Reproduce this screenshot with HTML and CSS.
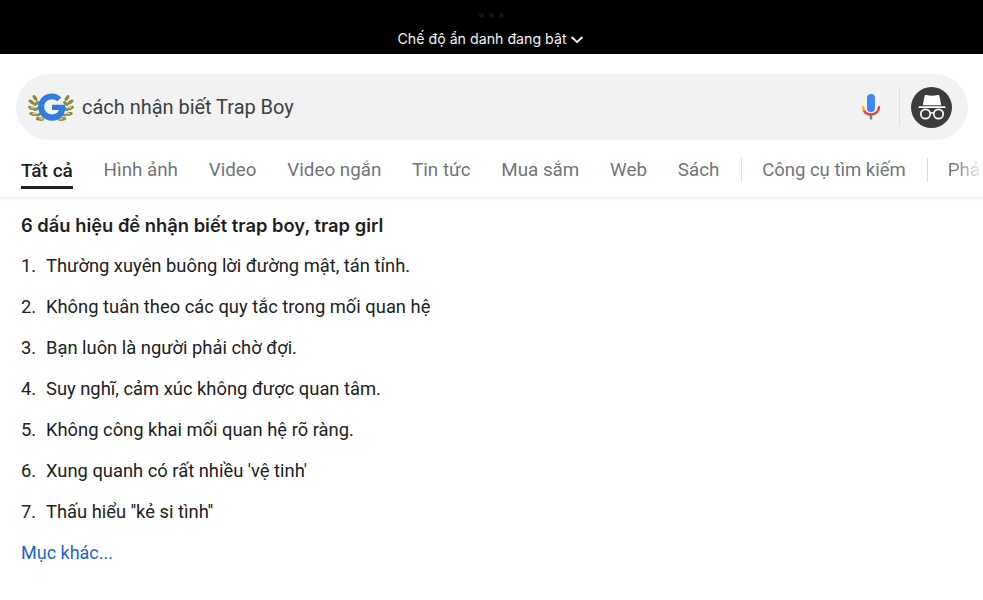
FILE: index.html
```html
<!DOCTYPE html>
<html lang="vi">
<head>
<meta charset="utf-8">
<title>cách nhận biết Trap Boy</title>
<link rel="stylesheet" href="styles.css">
</head>
<body>
<header class="statusbar">
  <div class="dots"><i></i><i></i><i></i></div>
  <div class="incognito-note">Chế độ ẩn danh đang bật
    <svg class="chev" width="12" height="8" viewBox="0 0 12 8"><path d="M1.2 1.5 6 6.2l4.8-4.700" fill="none" stroke="#fff" stroke-width="1.8" stroke-linecap="round" stroke-linejoin="round"/></svg>
  </div>
</header>
<section class="top">
  <div class="search">
    <svg class="logo" width="46" height="30" viewBox="0 0 46 30">
      <g fill="#8f8a3c">
        <ellipse cx="7" cy="6" rx="3.4" ry="1.700" transform="rotate(55 7 6)"/>
        <ellipse cx="3.500" cy="10" rx="3.400" ry="1.700" transform="rotate(35 3.500 10)"/>
        <ellipse cx="8.300" cy="11.500" rx="3.200" ry="1.500" transform="rotate(-40 8.300 11.500)"/>
        <ellipse cx="3.500" cy="16" rx="3.600" ry="1.800" transform="rotate(20 3.500 16)"/>
        <ellipse cx="8.500" cy="17" rx="3.200" ry="1.500" transform="rotate(-35 8.500 17)"/>
        <ellipse cx="5" cy="22" rx="3.800" ry="1.800" transform="rotate(10 5 22)"/>
        <ellipse cx="11" cy="22.500" rx="3.200" ry="1.500" transform="rotate(-25 11 22.500)"/>
        <ellipse cx="12" cy="27" rx="4.200" ry="1.800" transform="rotate(8 12 27)"/>
        <ellipse cx="39" cy="6" rx="3.400" ry="1.700" transform="rotate(-55 39 6)"/>
        <ellipse cx="42.500" cy="10" rx="3.400" ry="1.700" transform="rotate(-35 42.500 10)"/>
        <ellipse cx="37.700" cy="11.500" rx="3.200" ry="1.500" transform="rotate(40 37.700 11.500)"/>
        <ellipse cx="42.500" cy="16" rx="3.600" ry="1.800" transform="rotate(-20 42.500 16)"/>
        <ellipse cx="37.500" cy="17" rx="3.200" ry="1.500" transform="rotate(35 37.500 17)"/>
        <ellipse cx="41" cy="22" rx="3.800" ry="1.800" transform="rotate(-10 41 22)"/>
        <ellipse cx="35" cy="22.500" rx="3.200" ry="1.500" transform="rotate(25 35 22.500)"/>
        <ellipse cx="34" cy="27" rx="4.200" ry="1.800" transform="rotate(-8 34 27)"/>
      </g>
      <g fill="#d9d3a0">
        <ellipse cx="4" cy="15.500" rx="1.800" ry=".7" transform="rotate(20 4 15.500)"/>
        <ellipse cx="6" cy="21.700" rx="2" ry=".7" transform="rotate(10 6 21.700)"/>
        <ellipse cx="13" cy="26.800" rx="2.200" ry=".7" transform="rotate(8 13 26.800)"/>
        <ellipse cx="42" cy="15.500" rx="1.800" ry=".7" transform="rotate(-20 42 15.500)"/>
        <ellipse cx="40" cy="21.700" rx="2" ry=".7" transform="rotate(-10 40 21.700)"/>
        <ellipse cx="33" cy="26.800" rx="2.200" ry=".7" transform="rotate(-8 33 26.800)"/>
      </g>
      <path d="M37 12.800H24v5.200h7c-1 2.700-3.500 4.400-7 4.400-4.500 0-7.800-3.300-7.800-7.600s3.300-7.600 7.800-7.600c2.200 0 4 .8 5.400 2.100l3.900-3.900C30.600 2.900 27.600 1.500 24 1.500 15.800 1.500 10 7.500 10 14.800s5.800 14 14 14c7.900 0 13.300-5.500 13.300-13.200 0-1-.1-1.900-.3-2.800z" fill="#2f7de1"/>
    </svg>
    <span class="query">cách nhận biết Trap Boy</span>
    <svg class="mic" width="20" height="28" viewBox="0 0 20 28">
      <rect x="6" y="1" width="8" height="18" rx="4" fill="#4285f4"/>
      <path d="M10 21.500c-3.400 0-6.300-1.800-7.400-4.700" fill="none" stroke="#ea4335" stroke-width="2.400"/>
      <path d="M2.600 16.800c-.3-.8-.6-1.700-.6-2.700" fill="none" stroke="#fbbc05" stroke-width="2.400" stroke-linecap="round"/>
      <path d="M18 14.100c0 4.300-3.500 7.400-8 7.400" fill="none" stroke="#ea4335" stroke-width="2.400" stroke-linecap="round"/>
      <rect x="8.800" y="22" width="2.400" height="4.500" fill="#34a853"/>
    </svg>
    <span class="vline"></span>
    <span class="avatar">
      <svg width="30" height="26" viewBox="0 0 30 26">
        <path d="M7.500 2.200c.2-1 .8-1.300 1.800-1.100 1.900.4 3.800.6 5.700.6s3.800-.2 5.700-.6c1-.2 1.600.1 1.800 1.100L24.200 11.300H5.800z" fill="#fff"/>
        <rect x="1.500" y="12.300" width="27" height="1.700" rx=".85" fill="#fff"/>
        <circle cx="8.500" cy="20" r="4.700" fill="none" stroke="#fff" stroke-width="1.700"/>
        <circle cx="21.500" cy="20" r="4.700" fill="none" stroke="#fff" stroke-width="1.700"/>
        <path d="M13 19.300c1.300-.7 2.700-.7 4 0" fill="none" stroke="#fff" stroke-width="1.500"/>
      </svg>
    </span>
  </div>
  <nav class="tabs">
    <a class="tab active">Tất cả</a>
    <a class="tab">Hình ảnh</a>
    <a class="tab">Video</a>
    <a class="tab">Video ngắn</a>
    <a class="tab">Tin tức</a>
    <a class="tab">Mua sắm</a>
    <a class="tab">Web</a>
    <a class="tab">Sách</a>
    <span class="tab-sep"></span>
    <a class="tab tools">Công cụ tìm kiếm</a>
    <span class="tab-sep"></span>
    <a class="tab fade">Phả</a>
  </nav>
</section>
<main class="snippet">
  <h2 class="heading">6 dấu hiệu để nhận biết trap boy, trap girl</h2>
  <ol class="list">
    <li>Thường xuyên buông lời đường mật, tán tỉnh.</li>
    <li>Không tuân theo các quy tắc trong mối quan hệ</li>
    <li>Bạn luôn là người phải chờ đợi.</li>
    <li>Suy nghĩ, cảm xúc không được quan tâm.</li>
    <li>Không công khai mối quan hệ rõ ràng.</li>
    <li>Xung quanh có rất nhiều 'vệ tinh'</li>
    <li>Thấu hiểu ''kẻ si tình''</li>
  </ol>
  <a class="more">Mục khác...</a>
</main>
</body>
</html>
```
FILE: styles.css
```css
* { box-sizing: border-box; }
html, body { margin: 0; padding: 0; height: 100%; overflow: hidden; background: #fff; }
body { font-family: Roboto, "Noto Sans", sans-serif; color: #1f1f1f; width: 983px; }
.statusbar { height: 54px; background: #000; display: flex; flex-direction: column; align-items: center; padding-top: 13px; }
.dots { display: flex; gap: 5px; height: 5px; }
.dots i { width: 5px; height: 5px; border-radius: 50%; background: #161616; }
.incognito-note { font-family: Inter, sans-serif; font-size: 14.2px; line-height: 18px; color: #f2f2f2; margin-top: 12px; padding-right: 3px; display: flex; align-items: center; gap: 4px; white-space: nowrap; }
.chev { margin-top: 1px; }
.top { height: 144px; border-bottom: 1px solid #eeeeee; box-shadow: 0 1px 3px rgba(0,0,0,.07); overflow: hidden; padding-top: 20px; }
.search { margin: 0 15px 0 16px; height: 66px; border-radius: 33px; background: #f2f2f3; display: flex; align-items: center; padding: 0 16px 0 12px; }
.logo { flex: none; }
.query { font-size: 20px; margin-left: 8px; color: #3c4043; flex: 1; letter-spacing: -.03px; }
.mic { flex: none; margin-right: 18px; }
.vline { width: 1px; height: 38px; background: #dfdfdf; margin-right: 11px; }
.avatar { width: 41px; height: 41px; border-radius: 50%; background: #3c3c3e; display: flex; align-items: center; justify-content: center; }
.tabs { display: flex; align-items: flex-start; padding-left: 21px; margin-top: 15px; white-space: nowrap; }
.tab { font-size: 18.8px; line-height: 31px; height: 34px; color: #70757a; margin-right: 30.8px; }
.tab.active { color: #1f1f1f; font-weight: 500; font-size: 19px; border-bottom: 3px solid #1f1f1f; }
.tab.tools { font-size: 18.5px; margin-right: 30px; }
.tab.fade { margin-right: 0; color: transparent; background: linear-gradient(90deg, #70757a 20%, #e4e5e7 95%); -webkit-background-clip: text; background-clip: text; }
.tab-sep { width: 1px; height: 24px; background: #dadce0; margin: 3px 20px 0 -9px; flex: none; }
.snippet { padding: 14px 21px 0; }
.heading { font-family: Inter, sans-serif; font-size: 18.35px; font-weight: 600; line-height: 26px; margin: 0 0 1px; color: #1f1f1f; }
.list { list-style: none; counter-reset: item; margin: 0; padding: 0; }
.list li { counter-increment: item; display: flex; font-size: 18.35px; line-height: 27px; margin-top: 14px; color: #202124; }
.list li::before { content: counter(item) "."; flex: none; width: 25px; }
.more { display: block; font-size: 18px; line-height: 27px; margin-top: 14px; color: #1b62d8; }
```
